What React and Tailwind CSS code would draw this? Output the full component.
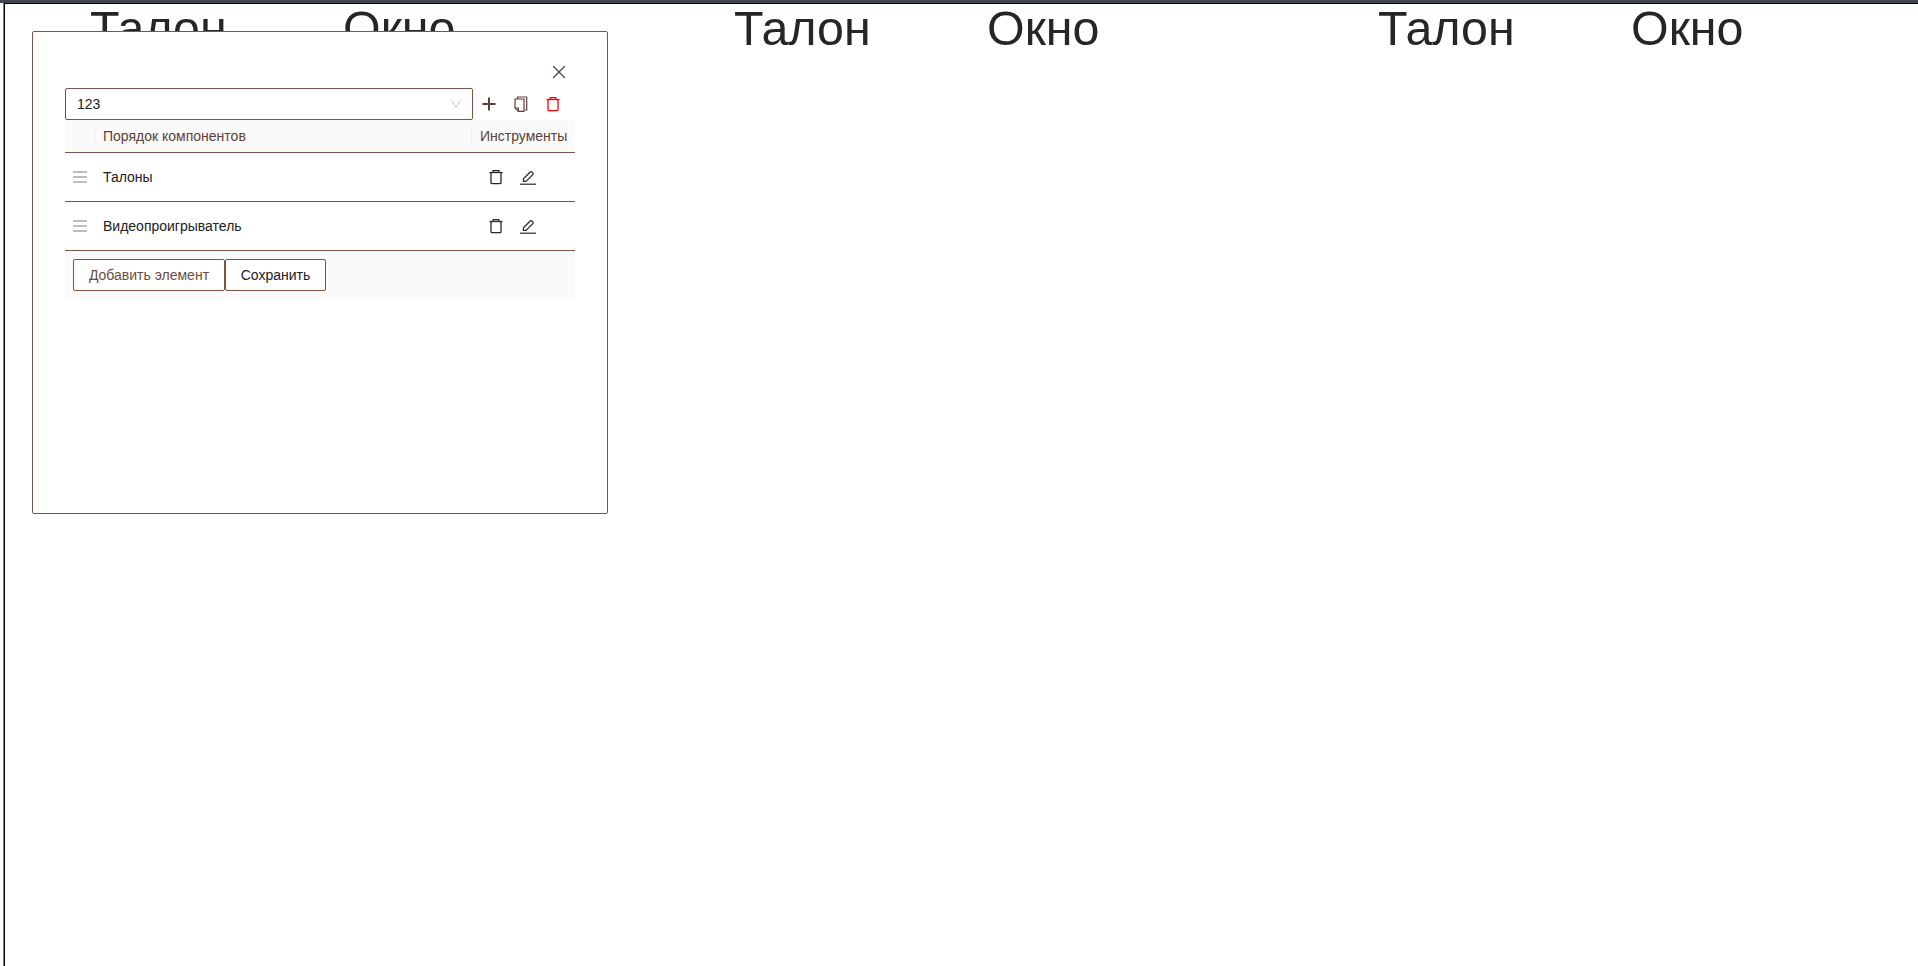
import { Plus, X } from "lucide-react";

const font = { fontFamily: '"Liberation Sans", Arial, sans-serif' };

function TrashIcon({ color = "#27272a" }) {
  return (
    <svg width="16" height="16" viewBox="0 0 16 16" fill="none" stroke={color} strokeWidth="1.3">
      <path d="M1.5 3.5h13" />
      <path d="M5.2 3.5V1.6h5.6v1.9" />
      <path d="M3 3.5v10.2a1 1 0 0 0 1 1h8a1 1 0 0 0 1-1V3.5" />
    </svg>
  );
}

function CopyIcon() {
  return (
    <svg width="16" height="16" viewBox="0 0 16 16" fill="none" stroke="#5d4037" strokeWidth="1.2">
      <path d="M4.5 3V1h9.2v13h-2" />
      <path d="M2 3h9v12.4H5.4L2 12z" />
      <path d="M2 12h3.4v3.4" />
    </svg>
  );
}

function PenIcon() {
  return (
    <svg width="16" height="16" viewBox="0 0 16 16" fill="none" stroke="#27272a" strokeWidth="1.2">
      <path d="M0 15.2h16" />
      <path d="M3.4 12.4v-2.6l6.8-6.8a1.2 1.2 0 0 1 1.7 0l.9.9a1.2 1.2 0 0 1 0 1.7l-6.8 6.8z" />
    </svg>
  );
}

function SelectArrow() {
  return (
    <svg width="10" height="8" viewBox="0 0 10 8" fill="none" stroke="#c4c4c4" strokeWidth="1">
      <path d="M.5.5 5 7.5 9.5.5" />
    </svg>
  );
}

function DragHandle() {
  return (
    <div className="flex w-[14px] flex-col gap-[3px]">
      <div className="h-0.5 bg-[#bdbdbd]" />
      <div className="h-0.5 bg-[#bdbdbd]" />
      <div className="h-0.5 bg-[#bdbdbd]" />
    </div>
  );
}

function Row({ name }) {
  return (
    <div className="flex h-[49px] items-center border-b border-[#795548] text-sm text-[#212121]">
      <div className="flex w-[30px] justify-end pr-2"><DragHandle /></div>
      <div className="flex-1 pl-2">{name}</div>
      <div className="flex w-[104px] items-center gap-4 pl-[17px]">
        <TrashIcon />
        <PenIcon />
      </div>
    </div>
  );
}

function Modal() {
  return (
    <div className="absolute left-[27px] top-[27px] h-[483px] w-[576px] rounded-[2px] border border-[#795548] bg-white px-[32px] pt-[32px]">
      <div className="flex h-[24px] justify-end pr-[5px]">
        <X size={22} strokeWidth={1.3} color="#5d4037" className="-mt-[3px]" />
      </div>
      <div className="flex items-center">
        <div className="flex h-[32px] w-[408px] items-center justify-between rounded-[2px] border border-[#795548] pl-[11px] pr-[11px] text-sm text-[#212121]">
          <span>123</span>
          <SelectArrow />
        </div>
        <div className="flex items-center pl-[6px]">
          <Plus size={20} strokeWidth={2.4} color="#5d4037" />
          <div className="ml-[14px]"><CopyIcon /></div>
          <div className="ml-[16px]"><TrashIcon color="#ff0000" /></div>
        </div>
      </div>
      <div className="w-[510px]">
        <div className="flex h-[33px] items-center border-b border-[#795548] bg-[#fafafa] text-sm text-[#5d4037]">
          <div className="w-[30px] self-stretch py-[5px]"><div className="h-full border-r border-[#eeeeee]" /></div>
          <div className="flex-1 pl-2">Порядок компонентов</div>
          <div className="flex h-[22px] w-[104px] items-center border-l border-[#eeeeee] pl-2">Инструменты</div>
        </div>
        <Row name="Талоны" />
        <Row name="Видеопроигрыватель" />
        <div className="flex h-[48px] items-center bg-[#fafafa] pl-2 text-sm">
          <button className="h-[32px] w-[152px] rounded-[2px] border border-[#795548] bg-white text-[#6d4c41]">Добавить элемент</button>
          <button className="h-[32px] w-[101px] rounded-[2px] border border-[#795548] bg-white text-[#212121]">Сохранить</button>
        </div>
      </div>
    </div>
  );
}

function Section() {
  return (
    <div className="flex w-[644px] shrink-0 pl-[85px] text-[48.4px] leading-[48px] text-[#262626]">
      <div className="w-[253px]">Талон</div>
      <div>Окно</div>
    </div>
  );
}

export default function App() {
  return (
    <div className="h-[966px] overflow-hidden border-t-[3px] border-[#44464f] bg-white pl-[3px]" style={font}>
      <div className="h-full border-l border-[#808080]">
        <div className="relative h-full border-l border-t border-black bg-white">
          <div className="flex">
            <Section />
            <Section />
            <Section />
          </div>
          <Modal />
        </div>
      </div>
    </div>
  );
}
